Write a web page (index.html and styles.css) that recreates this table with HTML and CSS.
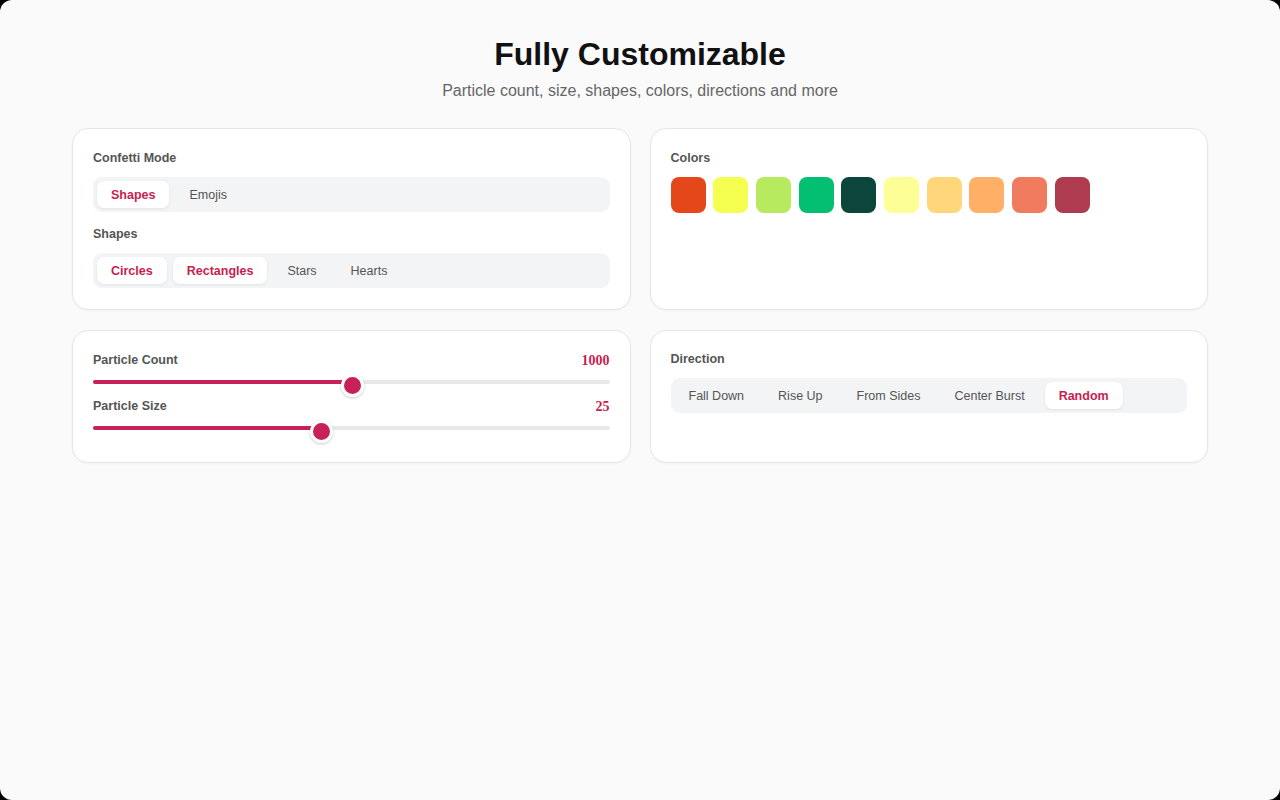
FILE: index.html
```html
<!DOCTYPE html>
<html>
<head>
<meta charset="utf-8">
<title>Fully Customizable</title>
<link rel="stylesheet" href="styles.css">
</head>
<body>
<div class="page">
  <header class="header">
    <h1 class="title">Fully Customizable</h1>
    <p class="subtitle">Particle count, size, shapes, colors, directions and more</p>
  </header>
  <main class="grid">
    <section class="card card-mode">
      <div class="group">
        <div class="label">Confetti Mode</div>
        <div class="seg">
          <span class="opt active">Shapes</span>
          <span class="opt">Emojis</span>
        </div>
      </div>
      <div class="group">
        <div class="label">Shapes</div>
        <div class="seg">
          <span class="opt active">Circles</span>
          <span class="opt active">Rectangles</span>
          <span class="opt">Stars</span>
          <span class="opt">Hearts</span>
        </div>
      </div>
    </section>
    <section class="card card-mode">
      <div class="group">
        <div class="label">Colors</div>
        <div class="swatches">
          <span class="sw c1"></span>
          <span class="sw c2"></span>
          <span class="sw c3"></span>
          <span class="sw c4"></span>
          <span class="sw c5"></span>
          <span class="sw c6"></span>
          <span class="sw c7"></span>
          <span class="sw c8"></span>
          <span class="sw c9"></span>
          <span class="sw c10"></span>
        </div>
      </div>
    </section>
    <section class="card card-sliders">
      <div class="slider-group">
        <div class="slider-head">
          <span class="label">Particle Count</span>
          <span class="value">1000</span>
        </div>
        <div class="track">
          <div class="fill" style="width: 50.1%"></div>
          <div class="thumb" style="left: 50.1%"></div>
        </div>
      </div>
      <div class="slider-group">
        <div class="slider-head">
          <span class="label">Particle Size</span>
          <span class="value">25</span>
        </div>
        <div class="track">
          <div class="fill" style="width: 44.1%"></div>
          <div class="thumb" style="left: 44.1%"></div>
        </div>
      </div>
    </section>
    <section class="card">
      <div class="group">
        <div class="label">Direction</div>
        <div class="seg">
          <span class="opt">Fall Down</span>
          <span class="opt">Rise Up</span>
          <span class="opt">From Sides</span>
          <span class="opt">Center Burst</span>
          <span class="opt active">Random</span>
        </div>
      </div>
    </section>
  </main>
</div>
</body>
</html>
```

FILE: styles.css
```css
html {
  margin: 0;
  padding: 0;
  background: #000;
}
body {
  margin: 0;
  padding: 0;
  font-family: "Liberation Sans", Arial, sans-serif;
}
.page {
  min-height: 800px;
  box-sizing: border-box;
  background: #fafafa;
  border-radius: 12px;
  padding: 35px 72px 40px;
}
.header {
  text-align: center;
}
.title {
  margin: 0;
  font-size: 32px;
  line-height: 38px;
  font-weight: 700;
  color: #111;
}
.subtitle {
  margin: 6px 0 0;
  font-size: 16px;
  line-height: 24px;
  color: #666;
}
.grid {
  margin-top: 25px;
  display: grid;
  grid-template-columns: 1fr 1fr;
  gap: 20px 19px;
}
.card {
  background: #fff;
  border: 1px solid #e6e6e8;
  border-radius: 16px;
  padding: 20px 20px 21px;
  box-shadow: 0 1px 2px rgba(0,0,0,0.03);
  display: flex;
  flex-direction: column;
  gap: 14px;
}
.card-mode {
  padding-top: 21px;
  padding-bottom: 21px;
}
.card-sliders {
  padding-top: 21px;
  padding-bottom: 32px;
}
.group {
  display: flex;
  flex-direction: column;
  gap: 10px;
}
.label {
  font-size: 12.5px;
  line-height: 17px;
  font-weight: 700;
  color: #555;
}
.seg {
  display: flex;
  gap: 6px;
  background: #f3f4f6;
  border-radius: 9px;
  padding: 4px;
  height: 35px;
  box-sizing: border-box;
}
.opt {
  display: flex;
  align-items: center;
  padding: 0 14px;
  font-size: 12.5px;
  color: #555;
  border-radius: 7px;
}
.opt.active {
  background: #fff;
  color: #c81e50;
  font-weight: 700;
  box-shadow: 0 1px 3px rgba(0,0,0,0.08);
}
.swatches {
  display: flex;
  gap: 7.7px;
}
.sw {
  width: 35px;
  height: 36px;
  border-radius: 8px;
}
.c1 { background: #e4481a; }
.c2 { background: #f4ff50; }
.c3 { background: #b8ea5f; }
.c4 { background: #02bf71; }
.c5 { background: #0b453c; }
.c6 { background: #fdff96; }
.c7 { background: #ffd77a; }
.c8 { background: #ffb066; }
.c9 { background: #f07b5e; }
.c10 { background: #ae3b4f; }
.slider-group {
  display: flex;
  flex-direction: column;
  gap: 11px;
}
.slider-head {
  display: flex;
  justify-content: space-between;
  align-items: center;
}
.value {
  font-family: "Liberation Serif", "Times New Roman", serif;
  font-weight: 700;
  font-size: 14px;
  color: #c81e50;
}
.track {
  position: relative;
  height: 4px;
  background: #e8e8ea;
  border-radius: 2px;
}
.fill {
  height: 4px;
  background: #c8215a;
  border-radius: 2px;
}
.thumb {
  position: absolute;
  top: -6px;
  width: 17px;
  height: 17px;
  margin-left: -11px;
  border-radius: 50%;
  background: #c8215a;
  border: 3px solid #fff;
  box-shadow: 0 1px 3px rgba(0,0,0,0.2);
}
```
